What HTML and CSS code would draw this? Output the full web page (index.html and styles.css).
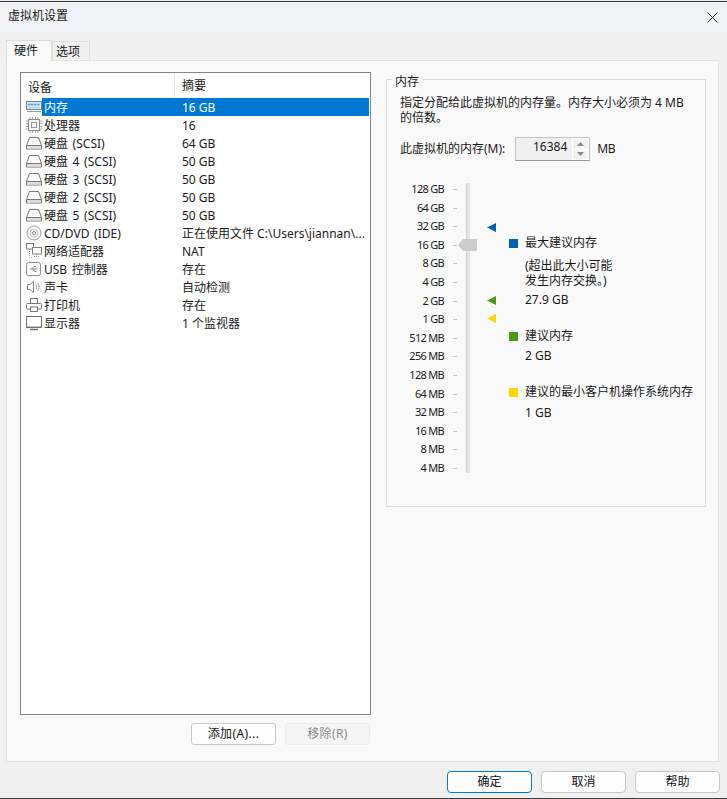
FILE: index.html
```html
<!DOCTYPE html>
<html lang="zh">
<head>
<meta charset="utf-8">
<title>虚拟机设置</title>
<link rel="stylesheet" href="styles.css">
</head>
<body>
<svg class="defs" width="0" height="0">
  <defs>
    <symbol id="i-mem" viewBox="0 0 16 16"><rect x="0.500" y="2.500" width="15" height="8" fill="#dbe8f4" stroke="#5f86ab"/><rect x="2" y="4.500" width="12" height="2" fill="#9cc3e6"/><path d="M2 5.500h12" stroke="#5f97cc" stroke-dasharray="2 1"/><path d="M2 8.500h12" stroke="#a9c8e4"/><path d="M1 12.500h14" stroke="#8a9aa8"/></symbol>
    <symbol id="i-cpu" viewBox="0 0 16 16"><rect x="2.500" y="2.500" width="11" height="11" fill="#f4f4f4" stroke="#8b8b8b"/><rect x="5.500" y="5.500" width="5" height="5" fill="#fff" stroke="#9a9a9a"/><path d="M4 0v2M6.500 0v2M9.500 0v2M12 0v2M4 14v2M6.500 14v2M9.500 14v2M12 14v2M0 4h2M0 6.500h2M0 9.500h2M0 12h2M14 4h2M14 6.500h2M14 9.500h2M14 12h2" stroke="#a8a8a8"/></symbol>
    <symbol id="i-hdd" viewBox="0 0 16 16"><path d="M3.500 2.500h9l3 8v3.500h-15v-3.500z" fill="#fff" stroke="#777"/><path d="M0.500 10.500h15" stroke="#777"/><rect x="1" y="11" width="14" height="2.500" fill="#ddd"/></symbol>
    <symbol id="i-cd" viewBox="0 0 16 16"><circle cx="8" cy="8" r="7" fill="#f8f8f8" stroke="#9a9a9a"/><circle cx="8" cy="8" r="4" fill="#ececec" stroke="#c8c8c8"/><circle cx="8" cy="8" r="1.500" fill="#fff" stroke="#8a8a8a"/></symbol>
    <symbol id="i-net" viewBox="0 0 16 16"><rect x="0.500" y="0.500" width="7" height="5.500" fill="#fff" stroke="#808080"/><rect x="6.500" y="4.500" width="9" height="6.500" fill="#fff" stroke="#808080"/><path d="M11 11v2M8 13.500h6M3.500 6v8.500h3" stroke="#909090" fill="none" stroke-dasharray="1 1"/></symbol>
    <symbol id="i-usb" viewBox="0 0 16 16"><rect x="0.500" y="1.500" width="14" height="13" rx="2" fill="#fff" stroke="#8c8c8c"/><path d="M3.500 8h8M6 8l2-2.500h2M6.500 8l2 2.500h2" stroke="#8c8c8c" fill="none"/></symbol>
    <symbol id="i-snd" viewBox="0 0 16 16"><path d="M1.500 5.500h2.500l3.500-3v11l-3.500-3h-2.500z" fill="#fff" stroke="#808080"/><path d="M10 5.500q1.500 2.500 0 5M12 4q2.500 4 0 8" fill="none" stroke="#a0a0a0"/></symbol>
    <symbol id="i-prn" viewBox="0 0 16 16"><rect x="4.500" y="1.500" width="7" height="5" fill="#fff" stroke="#777"/><rect x="0.500" y="6.500" width="15" height="5.500" rx="1" fill="#fff" stroke="#777"/><rect x="4.500" y="10" width="7" height="4.500" fill="#fff" stroke="#777"/></symbol>
    <symbol id="i-mon" viewBox="0 0 16 16"><rect x="0.500" y="1.500" width="15" height="11" fill="#fff" stroke="#6f6f6f"/><path d="M1 11.500h14" stroke="#c4c4c4"/><path d="M4 14.500h8" stroke="#6f6f6f" stroke-width="1.500"/></symbol>
  </defs>
</svg>
<div class="window">
  <header class="titlebar">
    <span class="title">虚拟机设置</span>
    <svg class="close" width="11" height="11" viewBox="0 0 11 11"><path d="M0.500 0.500l10 10M10.500 0.500l-10 10" stroke="#222" fill="none"/></svg>
  </header>
  <nav class="tabs">
    <span class="tab active">硬件</span>
    <span class="tab">选项</span>
  </nav>
  <main class="pane">
    <section class="left">
      <div class="list">
        <div class="row head"><span class="c1">设备</span><span class="c2">摘要</span></div>
        <div class="row selected"><svg class="ic"><use href="#i-mem"/></svg><span class="c1">内存</span><span class="c2">16 GB</span></div>
        <div class="row"><svg class="ic"><use href="#i-cpu"/></svg><span class="c1">处理器</span><span class="c2">16</span></div>
        <div class="row"><svg class="ic"><use href="#i-hdd"/></svg><span class="c1">硬盘 (SCSI)</span><span class="c2">64 GB</span></div>
        <div class="row"><svg class="ic"><use href="#i-hdd"/></svg><span class="c1">硬盘 4 (SCSI)</span><span class="c2">50 GB</span></div>
        <div class="row"><svg class="ic"><use href="#i-hdd"/></svg><span class="c1">硬盘 3 (SCSI)</span><span class="c2">50 GB</span></div>
        <div class="row"><svg class="ic"><use href="#i-hdd"/></svg><span class="c1">硬盘 2 (SCSI)</span><span class="c2">50 GB</span></div>
        <div class="row"><svg class="ic"><use href="#i-hdd"/></svg><span class="c1">硬盘 5 (SCSI)</span><span class="c2">50 GB</span></div>
        <div class="row"><svg class="ic"><use href="#i-cd"/></svg><span class="c1">CD/DVD (IDE)</span><span class="c2">正在使用文件 C:\Users\jiannan\...</span></div>
        <div class="row"><svg class="ic"><use href="#i-net"/></svg><span class="c1">网络适配器</span><span class="c2">NAT</span></div>
        <div class="row"><svg class="ic"><use href="#i-usb"/></svg><span class="c1">USB 控制器</span><span class="c2">存在</span></div>
        <div class="row"><svg class="ic"><use href="#i-snd"/></svg><span class="c1">声卡</span><span class="c2">自动检测</span></div>
        <div class="row"><svg class="ic"><use href="#i-prn"/></svg><span class="c1">打印机</span><span class="c2">存在</span></div>
        <div class="row"><svg class="ic"><use href="#i-mon"/></svg><span class="c1">显示器</span><span class="c2">1 个监视器</span></div>
      </div>
      <div class="list-actions">
        <button class="btn add">添加(A)...</button>
        <button class="btn remove" disabled>移除(R)</button>
      </div>
    </section>
    <section class="group">
      <span class="legend">内存</span>
      <p class="desc">指定分配给此虚拟机的内存量。内存大小必须为 4 MB 的倍数。</p>
      <div class="mem-row">
        <span>此虚拟机的内存(M):</span>
        <div class="spin">
          <span class="spin-val">16384</span>
          <span class="spin-btns">
            <span class="spin-btn"><svg width="7" height="4" viewBox="0 0 7 4"><path d="M3.500 0l3.500 4h-7z" fill="#8a8a8a"/></svg></span>
            <span class="spin-btn"><svg width="7" height="4" viewBox="0 0 7 4"><path d="M0 0h7l-3.500 4z" fill="#8a8a8a"/></svg></span>
          </span>
        </div>
        <span class="unit">MB</span>
      </div>
      <div class="chart">
        <div class="scale">
          <div class="tick">128 GB</div><div class="tick">64 GB</div><div class="tick">32 GB</div><div class="tick">16 GB</div>
          <div class="tick">8 GB</div><div class="tick">4 GB</div><div class="tick">2 GB</div><div class="tick">1 GB</div>
          <div class="tick">512 MB</div><div class="tick">256 MB</div><div class="tick">128 MB</div><div class="tick">64 MB</div>
          <div class="tick">32 MB</div><div class="tick">16 MB</div><div class="tick">8 MB</div><div class="tick">4 MB</div>
        </div>
        <div class="track">
          <svg class="thumb" width="19" height="12" viewBox="0 0 19 12"><path d="M0 6l5-6h14v12h-14z" fill="#cccccc"/></svg>
        </div>
        <svg class="mark m-blue" width="9" height="9" viewBox="0 0 9 9"><path d="M0 4.500l9-4.500v9z" fill="#0063b1"/></svg>
        <svg class="mark m-green" width="9" height="9" viewBox="0 0 9 9"><path d="M0 4.500l9-4.500v9z" fill="#489a0e"/></svg>
        <svg class="mark m-yellow" width="9" height="9" viewBox="0 0 9 9"><path d="M0 4.500l9-4.500v9z" fill="#ffd800"/></svg>
        <div class="legend-list">
          <div class="item i-max">
            <div class="item-head"><i class="sw blue"></i><span>最大建议内存</span></div>
            <div class="note">(超出此大小可能<br>发生内存交换。)</div>
            <div class="val">27.9 GB</div>
          </div>
          <div class="item i-rec">
            <div class="item-head"><i class="sw green"></i><span>建议内存</span></div>
            <div class="val">2 GB</div>
          </div>
          <div class="item i-min">
            <div class="item-head"><i class="sw yellow"></i><span>建议的最小客户机操作系统内存</span></div>
            <div class="val">1 GB</div>
          </div>
        </div>
      </div>
    </section>
  </main>
  <footer class="footer">
    <button class="btn primary">确定</button>
    <button class="btn">取消</button>
    <button class="btn">帮助</button>
  </footer>
</div>
</body>
</html>
```
FILE: styles.css
```css
* { box-sizing: border-box; }
html, body { margin: 0; padding: 0; }
body {
  width: 727px; height: 799px; overflow: hidden; background: #f0f0f0; padding-top: 1px;
  font: 12px/18px "Noto Sans", "Noto Sans CJK SC", sans-serif; color: #1a1a1a;
}
.defs { position: absolute; }
.window {
  width: 727px; height: 798px; display: flex; flex-direction: column;
  background: #f0f0f0; border-top: 1px solid #3a3a3a; border-bottom: 1px solid #3a3a3a;
}
.titlebar {
  height: 30px; flex: none; display: flex; align-items: center; justify-content: space-between;
  padding: 0 9px 2px 8px; background: #f2f3f6;
}
.title { font-size: 12px; }
.close { margin-top: 2px; }
.tabs { height: 28px; flex: none; display: flex; align-items: flex-end; padding-left: 6px; }
.tab {
  height: 19px; width: 38px; margin-left: 0; background: #f0f0f0; padding-left: 3px;
  border: 1px solid #e0e0e0; border-bottom: 0; line-height: 20px;
}
.tab.active {
  height: 21px; width: 46px; margin-left: 0; background: #f9f9f9; line-height: 20px; padding-left: 7px;
  position: relative; top: 1px; border-color: #dcdcdc;
}
.pane {
  height: 702px; flex: none; margin: 0 8px 0 6px; background: #f9f9f9; border: 1px solid #e2e2e2;
  display: flex; padding: 11px 12px 0 13px; gap: 15px;
}
.left { width: 351px; flex: none; display: flex; flex-direction: column; }
.list {
  height: 643px; flex: none; background: #fff; border: 1px solid #82878f;
  padding: 0 1px; 
}
.row { height: 18px; display: flex; align-items: center; position: relative; color: #1a1a1a; }
.row .ic { width: 16px; height: 16px; margin-left: 4px; flex: none; }
.c1 { margin-left: 2px; width: 138px; flex: none; white-space: nowrap; padding-top: 2px; word-spacing: 1.5px; }
.c2 { white-space: nowrap; padding-top: 2px; }
.row.head { height: 25px; padding-bottom: 1px; }
.row.head .c1 { margin-left: 6px; width: 147px; height: 24px; line-height: 26px; border-right: 1px solid #e4e4e4; }
.row.head .c2 { margin-left: 7px; line-height: 26px; }
.row.selected { color: #fff; }
.row.selected::before {
  content: ""; position: absolute; left: 20px; right: 0; top: 0; bottom: 0; background: #0078d4; z-index: 0;
}
.row.selected > * { position: relative; z-index: 1; }
.list-actions { display: flex; gap: 9px; justify-content: flex-end; margin-top: 8px; padding-right: 1px; }
.btn {
  width: 85px; height: 22px; padding: 0; background: #fdfdfd; border: 1px solid #c8c8c8; border-radius: 3px;
  font: inherit; line-height: 20px; color: #111;
}
.list-actions .btn { width: 85px; letter-spacing: 0.4px; }
.btn.remove { background: #f5f5f5; border-color: #ececec; color: #8a8a8a; }
.btn.primary { border-color: #0078d4; }
.group {
  width: 320px; height: 428px; flex: none; margin-top: 7px; position: relative;
  border: 1px solid #dcdcdc; padding: 15px 8px 0 13px;
}
.legend { position: absolute; left: 5px; top: -6px; padding: 0 3px; background: #f9f9f9; line-height: 16px; }
.desc { margin: 0; line-height: 15px; width: 290px; }
.mem-row { display: flex; align-items: center; margin-top: 12px; height: 24px; }
.spin {
  width: 75px; height: 24px; margin-left: 10px; display: flex; background: #f0f0f0; 
  border: 1px solid #c4c4c4; border-bottom-color: #9a9a9a;
}
.spin-val { flex: 1; text-align: right; padding-right: 5px; line-height: 18px; }
.spin-btns { width: 17px; display: flex; flex-direction: column; gap: 1px; background: #fff; padding: 1px 1px; }
.spin-btn { flex: 1; background: #f2f2f2; display: flex; align-items: center; justify-content: center; }
.unit { margin-left: 7px; letter-spacing: -0.5px; }
.chart { position: relative; display: flex; margin: 19px 0 0 -3px; height: 297px; }
.scale { width: 47px; height: 297px; display: flex; flex-direction: column; justify-content: space-between; flex: none; }
.tick {
  height: 18px; line-height: 18px; text-align: right; font-size: 11px; letter-spacing: -0.7px;
  position: relative; white-space: nowrap;
}
.tick::after { content: ""; position: absolute; right: -13px; top: 9px; width: 4px; height: 1px; background: #c8c8c8; }
.track { width: 4px; height: 290px; margin: 3px 0 0 22px; background: #e4e4e4; border-left: 1px solid #d4d4d4; position: relative; flex: none; }
.thumb { position: absolute; left: -9px; top: 56px; }
.mark { position: absolute; left: 90px; }
.m-blue { top: 43px; }
.m-green { top: 116px; }
.m-yellow { top: 134px; }
.legend-list { position: absolute; left: 112px; top: 0; width: 190px; }
.item { position: absolute; left: 0; width: 190px; }
.i-max { top: 54px; }
.i-rec { top: 147px; }
.i-min { top: 203px; }
.item-head { display: flex; align-items: center; gap: 7px; white-space: nowrap; }
.sw { width: 9px; height: 9px; flex: none; }
.sw.blue { background: #0063b1; }
.sw.green { background: #489a0e; }
.sw.yellow { background: #ffd800; }
.note { margin: 6px 0 0 16px; line-height: 15px; }
.val { margin: 3px 0 0 16px; }
.i-rec .val { margin-top: 2px; }
.footer { height: 35px; flex: none; display: flex; justify-content: flex-end; gap: 9px; padding: 9px 7px 0 0; }
.footer .btn { width: 85px; height: 22px; border-radius: 4px; }
```
